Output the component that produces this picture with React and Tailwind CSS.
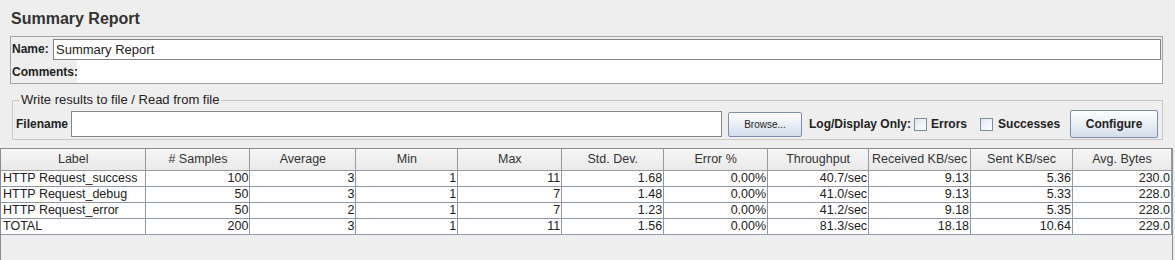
import React from "react";

const columns = [
  { name: "Label", w: 145 },
  { name: "# Samples", w: 104 },
  { name: "Average", w: 106 },
  { name: "Min", w: 102 },
  { name: "Max", w: 104 },
  { name: "Std. Dev.", w: 102 },
  { name: "Error %", w: 104 },
  { name: "Throughput", w: 101 },
  { name: "Received KB/sec", w: 102 },
  { name: "Sent KB/sec", w: 102 },
  { name: "Avg. Bytes", w: 99 },
];

const rows = [
  ["HTTP Request_success", "100", "3", "1", "11", "1.68", "0.00%", "40.7/sec", "9.13", "5.36", "230.0"],
  ["HTTP Request_debug", "50", "3", "1", "7", "1.48", "0.00%", "41.0/sec", "9.13", "5.33", "228.0"],
  ["HTTP Request_error", "50", "2", "1", "7", "1.23", "0.00%", "41.2/sec", "9.18", "5.35", "228.0"],
  ["TOTAL", "200", "3", "1", "11", "1.56", "0.00%", "81.3/sec", "18.18", "10.64", "229.0"],
];

const Checkbox = () => (
  <span className="inline-block shrink-0 w-[13px] h-[13px] border border-[#7d8ca3] bg-gradient-to-br from-[#dfe6ef] to-[#ffffff]" />
);

const App = () => {
  return (
    <div className="w-[1175px] h-[260px] bg-[#eeeeee] overflow-hidden flex flex-col text-[#222] font-['Liberation_Sans',Arial,sans-serif]">
      {/* Title */}
      <div className="pl-[11px] pt-[9px] h-[36px] text-[16px] leading-[20px] font-bold text-[#333]">
        Summary Report
      </div>

      {/* Name / Comments */}
      <div className="ml-[10px] w-[1153px] h-[48px] border border-[#a3a3a3] flex flex-col">
        <div className="flex items-center h-[23px] pt-[1px]">
          <span className="pl-[1px] w-[42px] text-[12px] font-bold">Name:</span>
          <div className="flex-1 mr-[1px] h-[21px] bg-white border border-[#858585] pl-[2px] text-[13px] leading-[19px]">
            Summary Report
          </div>
        </div>
        <div className="flex items-center flex-1">
          <span className="pl-[1px] w-[66px] text-[12px] font-bold">Comments:</span>
          <div className="flex-1 h-full bg-white" />
        </div>
      </div>

      {/* Write results fieldset */}
      <fieldset className="ml-[12px] mt-[9px] w-[1151px] h-[47px] border border-[#c8c8c8] px-[3px]">
        <legend className="ml-[3px] px-[2px] text-[13px] leading-[14px] text-[#222]">
          Write results to file / Read from file
        </legend>
        <div className="flex items-center w-full mt-[3px] whitespace-nowrap">
          <span className="shrink-0 text-[12px] font-bold w-[55px]">Filename</span>
          <div className="shrink-0 w-[651px] h-[26px] bg-white border border-[#858585]" />
          <button className="shrink-0 ml-[6px] w-[74px] h-[25px] border border-[#7d8ca8] rounded-[2px] bg-gradient-to-b from-[#ffffff] to-[#d3deeb] text-[10px] text-[#222]">
            Browse...
          </button>
          <span className="shrink-0 ml-[7px] text-[12px] font-bold">Log/Display Only:</span>
          <span className="shrink-0 ml-[3px] flex items-center"><Checkbox /></span>
          <span className="shrink-0 ml-[4px] text-[12px] font-bold">Errors</span>
          <span className="shrink-0 ml-[13px] flex items-center"><Checkbox /></span>
          <span className="shrink-0 ml-[5px] text-[12px] font-bold">Successes</span>
          <button className="shrink-0 ml-[10px] w-[88px] h-[28px] border border-[#7d8ca8] rounded-[2px] bg-gradient-to-b from-[#ffffff] to-[#d3deeb] text-[12px] font-bold text-[#222]">
            Configure
          </button>
        </div>
      </fieldset>

      {/* Results table */}
      <div className="mt-[8px] flex-1 w-[1173px] border-l border-r border-t border-[#8d8d8d] bg-[#eeeeee]">
        <table className="table-fixed border-collapse text-[12.5px] leading-[14px]">
          <colgroup>
            {columns.map((c) => (
              <col key={c.name} style={{ width: c.w }} />
            ))}
          </colgroup>
          <thead>
            <tr className="h-[21px]">
              {columns.map((c) => (
                <th
                  key={c.name}
                  className="font-normal text-center border-r border-b border-[#9a9a9a] bg-gradient-to-b from-[#f6f6f6] to-[#e9e9e9] text-[#333] p-0"
                >
                  {c.name}
                </th>
              ))}
            </tr>
          </thead>
          <tbody>
            {rows.map((r) => (
              <tr key={r[0]} className="h-[16px]">
                {r.map((v, i) => (
                  <td
                    key={i}
                    className={
                      i === 0
                        ? "bg-white border-r border-b border-[#8f99a6] pl-[2px] py-0 text-left whitespace-nowrap"
                        : "bg-white border-r border-b border-[#8f99a6] pr-[1px] py-0 text-right"
                    }
                  >
                    {v}
                  </td>
                ))}
              </tr>
            ))}
          </tbody>
        </table>
      </div>
    </div>
  );
};

export default App;
